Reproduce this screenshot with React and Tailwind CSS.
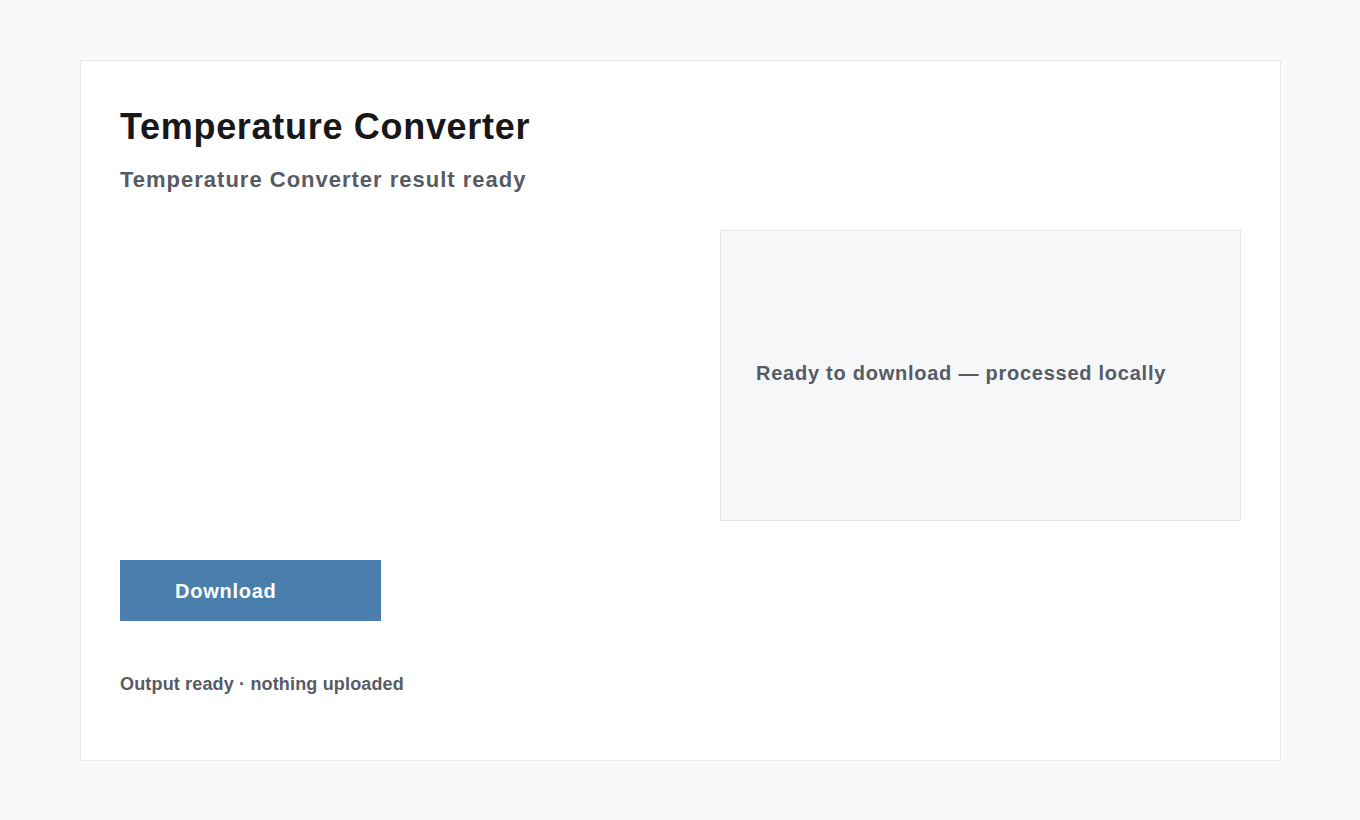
export default function App() {
  return (
    <div className="min-h-[820px] bg-[#f8f9fa] pt-[60px] pl-[80px] font-['Liberation_Sans',Arial,sans-serif]">
      <div className="w-[1201px] h-[701px] bg-white border border-[#e8e9ec] px-[39px] pt-[39px]">
        <h1 className="text-[36px] leading-[54px] font-bold tracking-[0.7px] text-[#18181b]">Temperature Converter</h1>
        <p className="mt-[10px] text-[22px] leading-[32px] font-bold tracking-[1px] text-[#575b64]">
          Temperature Converter result ready
        </p>

        <div className="mt-[34px] grid grid-cols-[520px_521px] gap-[80px]">
          <div></div>
          <div className="h-[291px] bg-[#f6f7f9] border border-[#e6e8eb] flex items-center px-[35px] pb-[6px]">
            <span className="text-[20px] font-bold tracking-[0.75px] text-[#575b64]">
              Ready to download — processed locally
            </span>
          </div>
        </div>

        <button className="mt-[39px] w-[261px] h-[61px] bg-[#4a7fad] text-white text-[20px] font-bold tracking-[0.75px] text-left pl-[55px]">
          Download
        </button>

        <p className="mt-[49px] text-[18px] leading-[28px] font-bold tracking-[0.16px] text-[#575b64]">
          Output ready · nothing uploaded
        </p>
      </div>
    </div>
  );
}
